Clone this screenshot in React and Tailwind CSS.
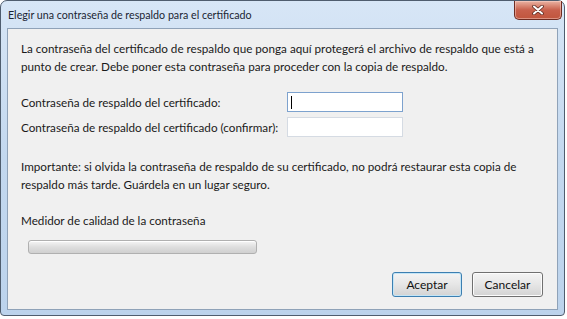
import React from 'react'

function CloseButton() {
    return (
        <div className="w-[48px] h-[19px] rounded-b-[5px] border border-t-0 border-[#6e2c22] bg-gradient-to-b from-[#e9b3a3] via-[#c8604c] to-[#c0553d] flex items-center justify-center shadow-[inset_0_0_0_1px_rgba(255,220,210,0.45)]">
            <svg width="12" height="10" viewBox="0 0 12 10">
                <path d="M2 1.5 L10 8.5 M10 1.5 L2 8.5" stroke="#5b2a22" strokeWidth="3.6" strokeLinecap="round" />
                <path d="M2 1.5 L10 8.5 M10 1.5 L2 8.5" stroke="#ffffff" strokeWidth="2" strokeLinecap="round" />
            </svg>
        </div>
    )
}

function Button({ children, primary }) {
    return (
        <button
            className={
                primary
                    ? 'w-[70px] h-[25px] rounded-[3px] border border-[#3c7fb1] bg-gradient-to-b from-[#f4f4f4] via-[#e6e6e6] to-[#d3d3d3] shadow-[inset_0_0_0_1px_#c4e5f6] text-[12px] text-[#111]'
                    : 'w-[71px] h-[25px] rounded-[3px] border border-[#707070] bg-gradient-to-b from-[#f4f4f4] via-[#e6e6e6] to-[#d3d3d3] shadow-[inset_0_0_0_1px_#fcfcfc] text-[12px] text-[#111]'
            }
        >
            {children}
        </button>
    )
}

export default function App() {
    return (
        <div className="w-[567px] h-[319px] bg-white" style={{ fontFamily: 'Lato, "Noto Sans", sans-serif' }}>
            <div className="w-[565px] h-[316px] rounded-t-[7px] rounded-b-[4px] border border-[#4f5d6e] bg-gradient-to-b from-[#d7e6f6] via-[#c3d8ef] to-[#bcd3ec] flex flex-col px-[6px] pb-[5px]">
                <div className="h-[27px] flex justify-between items-start">
                    <div className="pt-[6px] pl-[1px] text-[10.7px] text-[#1b2533]">Elegir una contraseña de respaldo para el certificado</div>
                    <div className="mr-[-4px]">
                        <CloseButton />
                    </div>
                </div>
                <div className="flex-1 border border-[#8fa2b8] bg-[#f0f0f0] flex flex-col pl-[13px] pr-[14px] pt-[10px] text-[11.7px] leading-[18px] text-[#1a1a1a]">
                    <p className="whitespace-nowrap">
                        La contraseña del certificado de respaldo que ponga aquí protegerá el archivo de respaldo que está a<br />
                        punto de crear. Debe poner esta contraseña para proceder con la copia de respaldo.
                    </p>
                    <div className="mt-[17px] flex flex-col gap-[5px]">
                        <div className="flex items-center">
                            <label className="w-[266px] whitespace-nowrap">Contraseña de respaldo del certificado:</label>
                            <div className="w-[116px] h-[20px] border border-[#7da2ce] bg-white flex items-center pl-[3px]">
                                <div className="w-[1px] h-[13px] bg-black" />
                            </div>
                        </div>
                        <div className="flex items-center">
                            <label className="w-[266px] whitespace-nowrap">Contraseña de respaldo del certificado (confirmar):</label>
                            <div className="w-[116px] h-[20px] border border-[#d5dbe3] bg-white" />
                        </div>
                    </div>
                    <p className="mt-[20px] whitespace-nowrap">
                        Importante: si olvida la contraseña de respaldo de su certificado, no podrá restaurar esta copia de<br />
                        respaldo más tarde. Guárdela en un lugar seguro.
                    </p>
                    <p className="mt-[18px]">Medidor de calidad de la contraseña</p>
                    <div className="mt-[11px] ml-[7px] w-[229px] h-[14px] rounded-[3px] border border-[#b0b0b0] bg-gradient-to-b from-[#f6f6f6] via-[#dedede] to-[#d0d0d0] shadow-[inset_0_1px_0_#ffffff]" />
                    <div className="mt-[18px] flex justify-end gap-[10px]">
                        <Button primary>Aceptar</Button>
                        <Button>Cancelar</Button>
                    </div>
                </div>
            </div>
        </div>
    )
}
